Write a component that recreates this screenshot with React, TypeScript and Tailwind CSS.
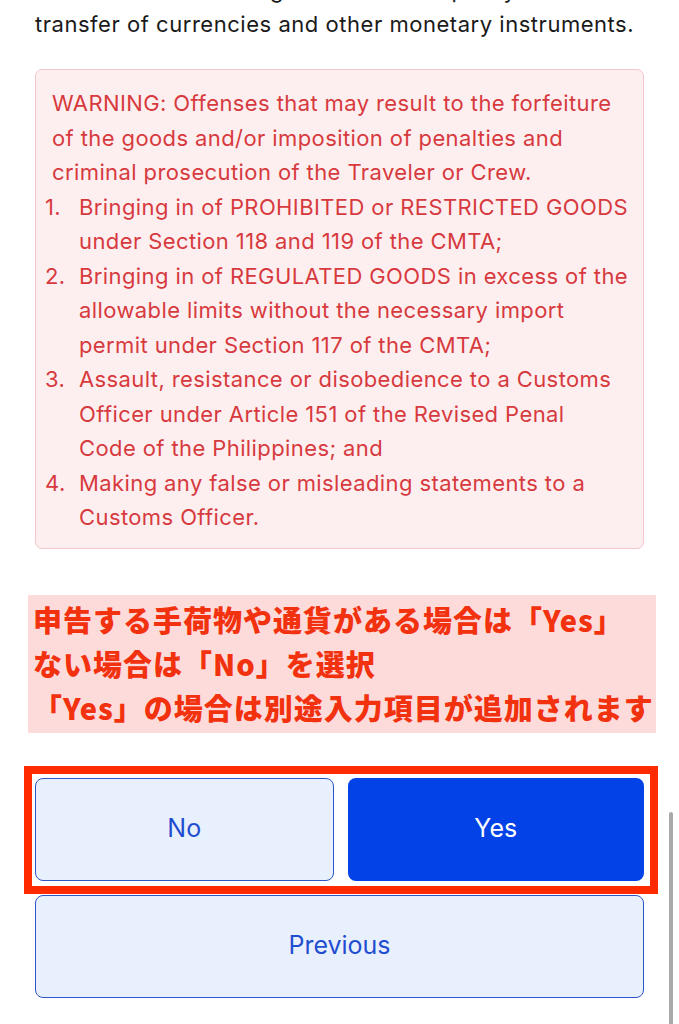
import React from "react";

const items: React.ReactNode[] = [
  "Bringing in of PROHIBITED or RESTRICTED GOODS under Section 118 and 119 of the CMTA;",
  "Bringing in of REGULATED GOODS in excess of the allowable limits without the necessary import permit under Section 117 of the CMTA;",
  <>
    Assault, resistance or disobedience to a Customs Officer under Article 151 of the Revised Penal
    <br />
    Code of the Philippines; and
  </>,
  "Making any false or misleading statements to a Customs Officer.",
];

export default function App() {
  return (
    <div className="relative w-[679px] h-[1024px] overflow-hidden bg-white" style={{ fontFamily: "Inter, 'Noto Sans', sans-serif" }}>
      <div className="px-[35px]">
        <p className="mt-[-27px] text-[22px] leading-[34px] text-[#1a1a1a] tracking-[0.53px] whitespace-nowrap">
          in accordance with regulations on the policy on the
          <br />
          transfer of currencies and other monetary instruments.
        </p>

        <div className="mt-[28px] rounded-[7px] border border-[#f5c6cb] bg-[#fdeff0] pl-[16px] pr-[8px] pt-[16px] pb-[13px] text-[#d73a3e] text-[22px] leading-[34.5px] tracking-[0.4px]">
          <p>
            WARNING: Offenses that may result to the forfeiture of the goods and/or imposition of penalties and criminal
            prosecution of the Traveler or Crew.
          </p>
          <ol className="ml-[-7px]">
            {items.map((t, i) => (
              <li key={i} className="flex">
                <span className="w-[34px] shrink-0">{i + 1}.</span>
                <span>{t}</span>
              </li>
            ))}
          </ol>
        </div>
      </div>

      <div
        className="mt-[46px] ml-[28px] w-[628px] bg-[#fddbdb] pl-[5px] pt-[2px] pb-[4px] text-[#f2310f] font-[900] text-[29px] leading-[44px] tracking-[1px]"
        style={{ fontFamily: "'Noto Sans CJK JP', sans-serif" }}
      >
        <div className="whitespace-nowrap">申告する手荷物や通貨がある場合は「Yes」</div>
        <div className="whitespace-nowrap">ない場合は「No」を選択</div>
        <div className="whitespace-nowrap">「Yes」の場合は別途入力項目が追加されます</div>
      </div>

      <div className="px-[35px] mt-[33px]">
        <div className="ml-[-11px] w-[634px] border-8 border-[#ff2a00] pl-[3px] pr-[6px] pt-[4px] pb-[5px]">
          <div className="flex gap-[14px]">
            <button className="flex-1 h-[103px] rounded-[8px] border-[1.5px] border-[#2d55c8] bg-[#e9f0fd] text-[#1f4ed0] text-[25px]">
              No
            </button>
            <button className="flex-1 h-[103px] rounded-[8px] bg-[#0342e6] text-white text-[25px]">Yes</button>
          </div>
        </div>
        <button className="mt-[1px] w-full h-[103px] rounded-[8px] border-[1.5px] border-[#2d55c8] bg-[#e9f0fd] text-[#1f4ed0] text-[25px]">
          Previous
        </button>
      </div>

      <div className="absolute left-[669px] top-[812px] w-[4px] h-[220px] rounded-full bg-[#a9a9a9]" />
    </div>
  );
}
